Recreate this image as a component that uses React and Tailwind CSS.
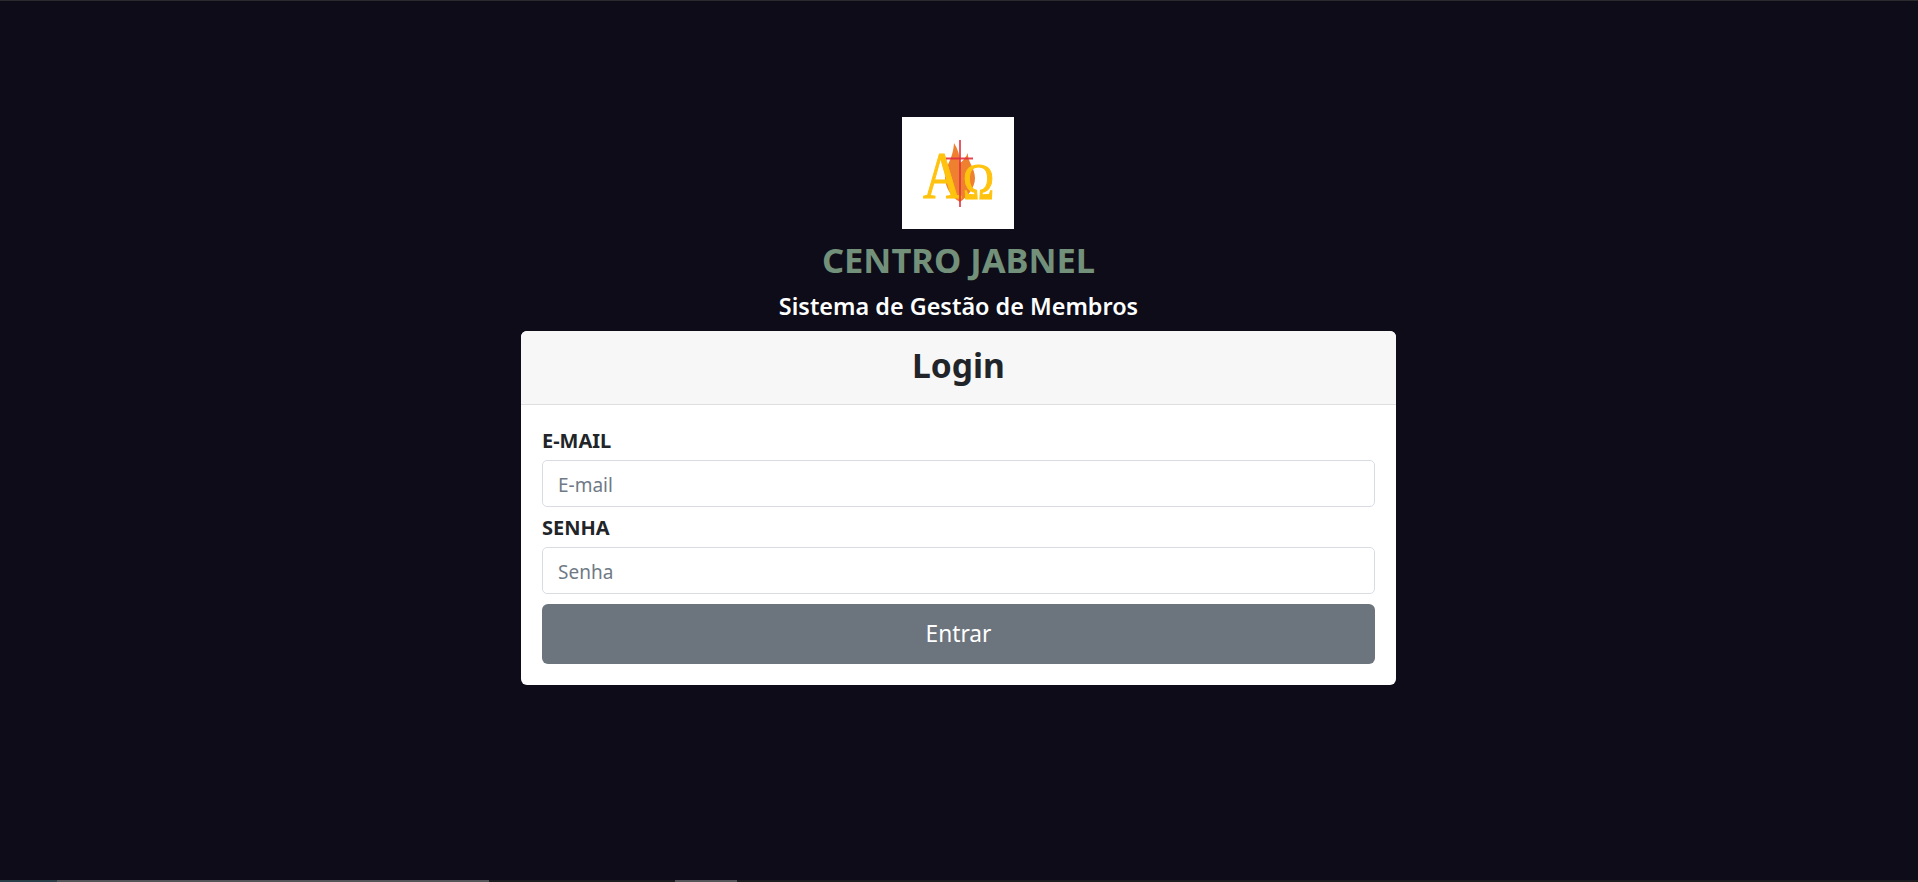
import React from "react";

const font = "font-['Noto_Sans','Open_Sans',sans-serif]";

function Logo() {
  return (
    <div className="w-[112px] h-[112px] bg-white">
      <svg viewBox="0 0 112 112" className="w-full h-full block blur-[0.4px]">
        {/* flame */}
        <path
          d="M58 85 C49 80 43 70 43 60 C43 49 51 43 52 26 C56 32 58 39 58 46 C61 44 64 40 66 36 C65 44 73 51 73 61 C73 71 65 80 58 85 Z"
          fill="#ee8030"
        />
        <text
          transform="translate(21 81) scale(0.86 1.08)"
          fontFamily="Liberation Serif"
          fontSize="62"
          stroke="#ffc20e"
          strokeWidth="1"
          fill="#ffc20e"
        >
          A
        </text>
        <text
          transform="translate(61 81) scale(0.95 1.15)"
          fontFamily="Liberation Serif"
          fontSize="44"
          stroke="#ffc20e"
          strokeWidth="1"
          fill="#ffc20e"
        >
          Ω
        </text>
        {/* cross */}
        <path d="M58 23 V90" stroke="#e0313f" strokeWidth="2" opacity="0.8" />
        <path d="M44 41.5 H71" stroke="#e0313f" strokeWidth="2" opacity="0.9" />
      </svg>
    </div>
  );
}

function Field({ label, placeholder, type }) {
  return (
    <div className="mb-[7px]">
      <label className="block font-bold text-[20px] leading-[27px] text-[#212529] mb-[6px]">
        {label}
      </label>
      <input
        type={type}
        placeholder={placeholder}
        className="block w-full h-[47px] px-[15px] pt-[2px] rounded-[5px] border border-[#d9dce3] bg-white text-[19px] placeholder:text-[#6f7a86] outline-none"
      />
    </div>
  );
}

export default function App() {
  return (
    <div className={`h-screen flex flex-col bg-[#0d0c18] overflow-hidden ${font}`}>
      <div className="h-px bg-[#2b2b2e]" />

      <div className="flex-1 flex flex-col items-center pt-[116px] pr-px">
        <div className="mr-[2px]">
          <Logo />
        </div>
        <h2 className="mt-[10px] text-[34.5px] leading-[42px] font-bold text-[#73917a]">
          CENTRO JABNEL
        </h2>
        <h5 className="mt-[11px] text-[23.4px] leading-[29px] font-semibold text-white">
          Sistema de Gestão de Membros
        </h5>

        <div className="mt-[10px] w-[875px] rounded-[6px] bg-white overflow-hidden">
          <div className="h-[74px] pb-[4px] flex items-center justify-center bg-[#f7f7f7] border-b border-[#dfdfdf]">
            <h1 className="text-[33.6px] font-bold text-[#212529]">Login</h1>
          </div>
          <form className="px-[21px] pt-[22px] pb-[21px]">
            <Field label="E-MAIL" placeholder="E-mail" type="email" />
            <Field label="SENHA" placeholder="Senha" type="password" />
            <button
              type="button"
              className="w-full h-[60px] mt-[10px] block rounded-[6px] bg-[#6c757d] text-white text-[22.7px]"
            >
              Entrar
            </button>
          </form>
        </div>
      </div>

      {/* window edge */}
      <div className="h-[2px] flex bg-[#1c1c20]">
        <div className="w-[57px] bg-[#2a4048]" />
        <div className="w-[432px] bg-[#55555a]" />
        <div className="w-[186px]" />
        <div className="w-[62px] bg-[#55555a]" />
      </div>
    </div>
  );
}
